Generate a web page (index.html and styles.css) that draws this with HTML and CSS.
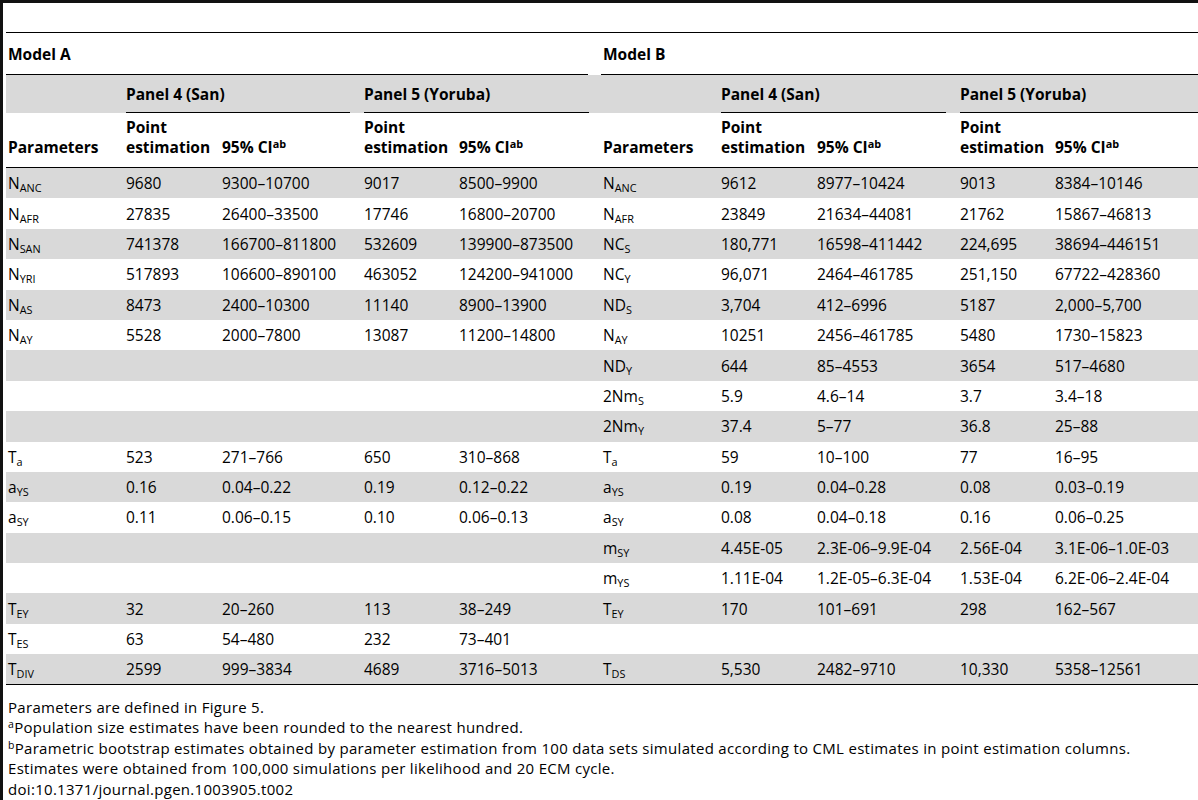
FILE: index.html
```html
<!DOCTYPE html>
<html lang="en">
<head>
<meta charset="utf-8">
<title>Table 2</title>
<link rel="stylesheet" href="styles.css">
</head>
<body>
<div class="page">
<table class="tbl">
<colgroup>
<col class="c-param"><col class="c-pt"><col class="c-ci"><col class="c-pt2"><col class="c-ci2">
<col class="c-param"><col class="c-pt"><col class="c-ci3"><col class="c-pt2"><col class="c-ci4">
</colgroup>
<thead>
<tr class="cap"><td colspan="10"></td></tr>
<tr class="models">
<th colspan="5" class="model">Model A</th>
<th colspan="5" class="model last">Model B</th>
</tr>
<tr class="panels">
<th></th>
<th colspan="2" class="panel">Panel 4 (San)</th>
<th colspan="2" class="panel">Panel 5 (Yoruba)</th>
<th></th>
<th colspan="2" class="panel">Panel 4 (San)</th>
<th colspan="2" class="panel last">Panel 5 (Yoruba)</th>
</tr>
<tr class="heads">
<th>Parameters</th><th>Point<br>estimation</th><th>95% CI<sup>ab</sup></th><th>Point<br>estimation</th><th>95% CI<sup>ab</sup></th>
<th>Parameters</th><th>Point<br>estimation</th><th>95% CI<sup>ab</sup></th><th>Point<br>estimation</th><th>95% CI<sup>ab</sup></th>
</tr>
</thead>
<tbody>
<tr><td>N<sub>ANC</sub></td><td>9680</td><td>9300–10700</td><td>9017</td><td>8500–9900</td><td>N<sub>ANC</sub></td><td>9612</td><td>8977–10424</td><td>9013</td><td>8384–10146</td></tr>
<tr><td>N<sub>AFR</sub></td><td>27835</td><td>26400–33500</td><td>17746</td><td>16800–20700</td><td>N<sub>AFR</sub></td><td>23849</td><td>21634–44081</td><td>21762</td><td>15867–46813</td></tr>
<tr><td>N<sub>SAN</sub></td><td>741378</td><td>166700–811800</td><td>532609</td><td>139900–873500</td><td>NC<sub>S</sub></td><td>180,771</td><td>16598–411442</td><td>224,695</td><td>38694–446151</td></tr>
<tr><td>N<sub>YRI</sub></td><td>517893</td><td>106600–890100</td><td>463052</td><td>124200–941000</td><td>NC<sub>Y</sub></td><td>96,071</td><td>2464–461785</td><td>251,150</td><td>67722–428360</td></tr>
<tr><td>N<sub>AS</sub></td><td>8473</td><td>2400–10300</td><td>11140</td><td>8900–13900</td><td>ND<sub>S</sub></td><td>3,704</td><td>412–6996</td><td>5187</td><td>2,000–5,700</td></tr>
<tr><td>N<sub>AY</sub></td><td>5528</td><td>2000–7800</td><td>13087</td><td>11200–14800</td><td>N<sub>AY</sub></td><td>10251</td><td>2456–461785</td><td>5480</td><td>1730–15823</td></tr>
<tr><td></td><td></td><td></td><td></td><td></td><td>ND<sub>Y</sub></td><td>644</td><td>85–4553</td><td>3654</td><td>517–4680</td></tr>
<tr><td></td><td></td><td></td><td></td><td></td><td>2Nm<sub>S</sub></td><td>5.9</td><td>4.6–14</td><td>3.7</td><td>3.4–18</td></tr>
<tr><td></td><td></td><td></td><td></td><td></td><td>2Nm<sub>Y</sub></td><td>37.4</td><td>5–77</td><td>36.8</td><td>25–88</td></tr>
<tr><td>T<sub>a</sub></td><td>523</td><td>271–766</td><td>650</td><td>310–868</td><td>T<sub>a</sub></td><td>59</td><td>10–100</td><td>77</td><td>16–95</td></tr>
<tr><td>a<sub>YS</sub></td><td>0.16</td><td>0.04–0.22</td><td>0.19</td><td>0.12–0.22</td><td>a<sub>YS</sub></td><td>0.19</td><td>0.04–0.28</td><td>0.08</td><td>0.03–0.19</td></tr>
<tr><td>a<sub>SY</sub></td><td>0.11</td><td>0.06–0.15</td><td>0.10</td><td>0.06–0.13</td><td>a<sub>SY</sub></td><td>0.08</td><td>0.04–0.18</td><td>0.16</td><td>0.06–0.25</td></tr>
<tr><td></td><td></td><td></td><td></td><td></td><td>m<sub>SY</sub></td><td>4.45E-05</td><td>2.3E-06–9.9E-04</td><td>2.56E-04</td><td>3.1E-06–1.0E-03</td></tr>
<tr><td></td><td></td><td></td><td></td><td></td><td>m<sub>YS</sub></td><td>1.11E-04</td><td>1.2E-05–6.3E-04</td><td>1.53E-04</td><td>6.2E-06–2.4E-04</td></tr>
<tr><td>T<sub>EY</sub></td><td>32</td><td>20–260</td><td>113</td><td>38–249</td><td>T<sub>EY</sub></td><td>170</td><td>101–691</td><td>298</td><td>162–567</td></tr>
<tr><td>T<sub>ES</sub></td><td>63</td><td>54–480</td><td>232</td><td>73–401</td><td></td><td></td><td></td><td></td><td></td></tr>
<tr><td>T<sub>DIV</sub></td><td>2599</td><td>999–3834</td><td>4689</td><td>3716–5013</td><td>T<sub>DS</sub></td><td>5,530</td><td>2482–9710</td><td>10,330</td><td>5358–12561</td></tr>
</tbody>
</table>
<div class="notes">
<p>Parameters are defined in Figure 5.</p>
<p><sup>a</sup>Population size estimates have been rounded to the nearest hundred.</p>
<p><sup>b</sup>Parametric bootstrap estimates obtained by parameter estimation from 100 data sets simulated according to CML estimates in point estimation columns.</p>
<p>Estimates were obtained from 100,000 simulations per likelihood and 20 ECM cycle.</p>
<p>doi:10.1371/journal.pgen.1003905.t002</p>
</div>
</div>
</body>
</html>
```
FILE: styles.css
```css
html, body {
  margin: 0;
  padding: 0;
  background: #fff;
}

body {
  font-family: "Open Sans", "Noto Sans", sans-serif;
  font-size: 15.5px;
  color: #000;
}

.page {
  box-sizing: border-box;
  height: 800px;
  border-top: 3px solid #111;
  border-left: 3px solid #111;
  overflow: hidden;
}

.tbl {
  margin-left: 3px;
  width: 1192px;
  table-layout: fixed;
  border-spacing: 0;
}

.c-param { width: 118px; }
.c-pt { width: 96px; }
.c-ci { width: 142px; }
.c-pt2 { width: 95px; }
.c-ci2 { width: 144px; }
.c-ci3 { width: 143px; }
.c-ci4 { width: 145px; }

.tbl th,
.tbl td {
  padding: 0 2px 0 2px;
  text-align: left;
  white-space: nowrap;
  overflow: visible;
}

.tbl th {
  font-weight: 700;
  font-size: 15.5px;
}

.cap td {
  height: 29px;
  border-bottom: 1px solid #000;
}

.models th {
  height: 41px;
  vertical-align: middle;
  padding-bottom: 1px;
  background: linear-gradient(#000, #000) 0 100% / calc(100% - 13px) 1px no-repeat;
}

.panels th {
  height: 37px;
  padding-bottom: 1px;
  background: #d9d9d9;
}

.panels th.panel {
  background: linear-gradient(#000, #000) 2px 100% / calc(100% - 14px) 1px no-repeat, #d9d9d9;
}

.models th.last {
  background: linear-gradient(#000, #000) 0 100% / 100% 1px no-repeat;
}

.panels th.panel.last {
  background: linear-gradient(#000, #000) 2px 100% / 100% 1px no-repeat, #d9d9d9;
}

.heads th {
  height: 55px;
  box-sizing: border-box;
  vertical-align: bottom;
  line-height: 20px;
  padding-bottom: 10px;
  border-bottom: 1px solid #000;
}

.tbl tbody td {
  height: 30.4px;
  box-sizing: border-box;
  vertical-align: middle;
  line-height: 20px;
}

.tbl tbody tr:nth-child(odd) td {
  background: #d9d9d9;
}

.tbl tbody tr:last-child td {
  border-bottom: 1px solid #000;
}

sub {
  font-size: 0.7em;
  vertical-align: -0.3em;
  line-height: 0;
}

sup {
  font-size: 0.7em;
  vertical-align: 0.45em;
  line-height: 0;
}

.notes {
  margin-top: 12px;
  padding-left: 5px;
  line-height: 20.5px;
  font-size: 15px;
  letter-spacing: 0.3px;
}

.notes p {
  margin: 0;
}
```
